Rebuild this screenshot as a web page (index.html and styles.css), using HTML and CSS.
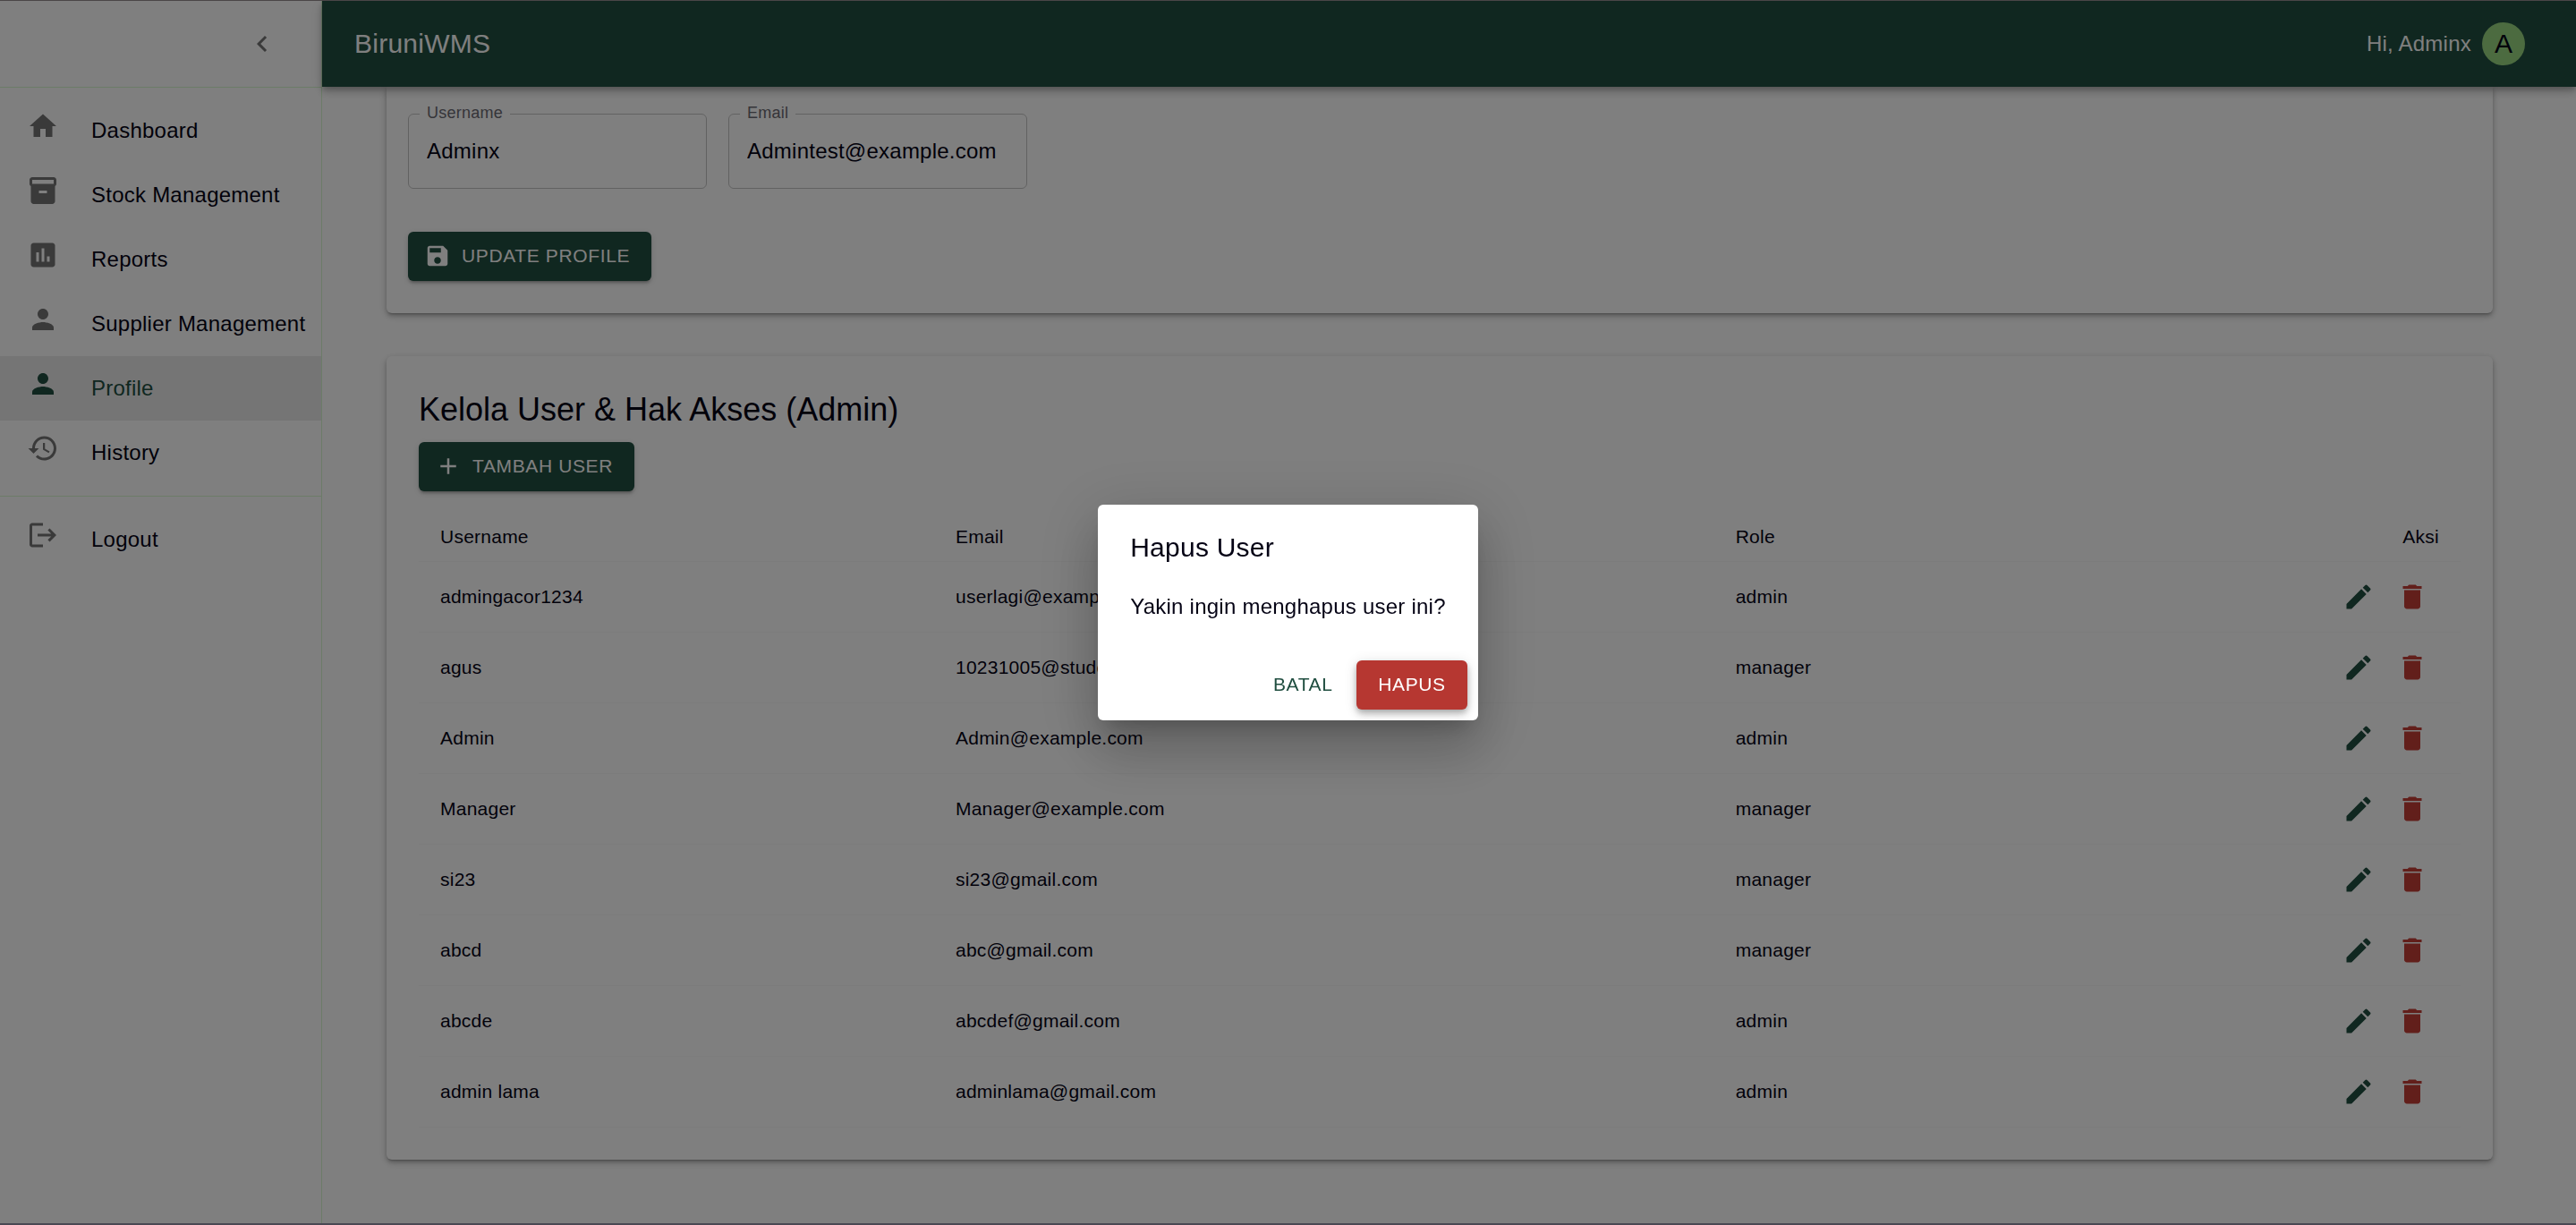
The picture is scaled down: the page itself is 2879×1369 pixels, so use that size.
FILE: index.html
```html
<!DOCTYPE html>
<html lang="id">
<head>
<meta charset="utf-8">
<meta name="viewport" content="width=device-width, initial-scale=1">
<title>BiruniWMS</title>
<link rel="stylesheet" href="styles.css">
</head>
<body>
<svg class="sprite" aria-hidden="true">
  <symbol id="i-person" viewBox="0 0 24 24"><path d="M12 12c2.21 0 4-1.79 4-4s-1.79-4-4-4-4 1.79-4 4 1.79 4 4 4m0 2c-2.67 0-8 1.34-8 4v2h16v-2c0-2.66-5.33-4-8-4"/></symbol>
  <symbol id="i-edit" viewBox="0 0 24 24"><path d="M3 17.25V21h3.75L17.81 9.94l-3.75-3.75zM20.71 7.04c.39-.39.39-1.02 0-1.41l-2.34-2.34a.996.996 0 0 0-1.41 0l-1.83 1.83 3.75 3.75z"/></symbol>
  <symbol id="i-delete" viewBox="0 0 24 24"><path d="M6 19c0 1.1.9 2 2 2h8c1.1 0 2-.9 2-2V7H6zM19 4h-3.5l-1-1h-5l-1 1H5v2h14z"/></symbol>
</svg>

<div class="app">
  <aside class="drawer">
    <div class="drawer-top">
      <button class="icon-button" type="button" aria-label="Tutup menu">
        <svg class="icon" viewBox="0 0 24 24"><path d="M15.41 7.41 14 6l-6 6 6 6 1.41-1.41L10.83 12z"/></svg>
      </button>
    </div>
    <nav class="menu">
      <a class="menu-item" href="#dashboard"><span class="menu-icon"><svg class="icon" viewBox="0 0 24 24"><path d="M10 20v-6h4v6h5v-8h3L12 3 2 12h3v8z"/></svg></span>Dashboard</a>
      <a class="menu-item" href="#stock"><span class="menu-icon"><svg class="icon" viewBox="0 0 24 24"><path d="M20 2H4c-1 0-2 .9-2 2v3.01c0 .72.43 1.34 1 1.69V20c0 1.1 1.1 2 2 2h14c.9 0 2-.9 2-2V8.7c.57-.35 1-.97 1-1.69V4c0-1.1-1-2-2-2m-5 12H9v-2h6zm5-7H4V4h16z"/></svg></span>Stock Management</a>
      <a class="menu-item" href="#reports"><span class="menu-icon"><svg class="icon" viewBox="0 0 24 24"><path d="M19 3H5c-1.1 0-2 .9-2 2v14c0 1.1.9 2 2 2h14c1.1 0 2-.9 2-2V5c0-1.1-.9-2-2-2M9 17H7v-7h2zm4 0h-2V7h2zm4 0h-2v-4h2z"/></svg></span>Reports</a>
      <a class="menu-item" href="#supplier"><span class="menu-icon"><svg class="icon"><use href="#i-person"/></svg></span>Supplier Management</a>
      <a class="menu-item selected" href="#profile" aria-current="page"><span class="menu-icon"><svg class="icon"><use href="#i-person"/></svg></span>Profile</a>
      <a class="menu-item" href="#history"><span class="menu-icon"><svg class="icon" viewBox="0 0 24 24"><path d="M13 3c-4.97 0-9 4.03-9 9H1l3.89 3.89.07.14L9 12H6c0-3.87 3.13-7 7-7s7 3.13 7 7-3.13 7-7 7c-1.93 0-3.68-.79-4.94-2.06l-1.42 1.42C8.27 19.99 10.51 21 13 21c4.97 0 9-4.03 9-9s-4.03-9-9-9m-1 5v5l4.28 2.54.72-1.21-3.5-2.08V8z"/></svg></span>History</a>
    </nav>
    <nav class="menu">
      <a class="menu-item" href="#logout"><span class="menu-icon"><svg class="icon" viewBox="0 0 24 24"><path d="m17 7-1.41 1.41L18.17 11H8v2h10.17l-2.58 2.58L17 17l5-5zM4 5h8V3H4c-1.1 0-2 .9-2 2v14c0 1.1.9 2 2 2h8v-2H4z"/></svg></span>Logout</a>
    </nav>
  </aside>

  <div class="page">
    <header class="app-bar">
      <h1 class="brand">BiruniWMS</h1>
      <span>Hi, Adminx</span>
      <span class="avatar">A</span>
    </header>

    <main class="content">
      <section class="card profile-card">
        <form class="profile-form">
          <div class="fields">
            <fieldset class="field">
              <legend><label for="username">Username</label></legend>
              <input id="username" type="text" value="Adminx">
            </fieldset>
            <fieldset class="field">
              <legend><label for="email">Email</label></legend>
              <input id="email" type="email" value="Admintest@example.com">
            </fieldset>
          </div>
          <button class="button filled" type="button">
            <svg class="icon small" viewBox="0 0 24 24"><path d="M17 3H5c-1.11 0-2 .9-2 2v14c0 1.1.89 2 2 2h14c1.1 0 2-.9 2-2V7zm-5 16c-1.66 0-3-1.34-3-3s1.34-3 3-3 3 1.34 3 3-1.34 3-3 3m3-10H5V5h10z"/></svg>
            UPDATE PROFILE
          </button>
        </form>
      </section>

      <section class="card users-card">
        <h2 class="card-title">Kelola User &amp; Hak Akses (Admin)</h2>
        <button class="button filled" type="button">
          <svg class="icon small" viewBox="0 0 24 24"><path d="M19 13h-6v6h-2v-6H5v-2h6V5h2v6h6z"/></svg>
          TAMBAH USER
        </button>
        <table class="users">
          <thead>
            <tr><th class="col-user" scope="col">Username</th><th class="col-email" scope="col">Email</th><th scope="col">Role</th><th class="actions" scope="col">Aksi</th></tr>
          </thead>
          <tbody>
            <tr><td>admingacor1234</td><td>userlagi@example.com</td><td>admin</td><td class="actions"><button class="icon-button edit" type="button" aria-label="Edit"><svg class="icon"><use href="#i-edit"/></svg></button><button class="icon-button delete" type="button" aria-label="Hapus"><svg class="icon"><use href="#i-delete"/></svg></button></td></tr>
            <tr><td>agus</td><td>10231005@student.itk.ac.id</td><td>manager</td><td class="actions"><button class="icon-button edit" type="button" aria-label="Edit"><svg class="icon"><use href="#i-edit"/></svg></button><button class="icon-button delete" type="button" aria-label="Hapus"><svg class="icon"><use href="#i-delete"/></svg></button></td></tr>
            <tr><td>Admin</td><td>Admin@example.com</td><td>admin</td><td class="actions"><button class="icon-button edit" type="button" aria-label="Edit"><svg class="icon"><use href="#i-edit"/></svg></button><button class="icon-button delete" type="button" aria-label="Hapus"><svg class="icon"><use href="#i-delete"/></svg></button></td></tr>
            <tr><td>Manager</td><td>Manager@example.com</td><td>manager</td><td class="actions"><button class="icon-button edit" type="button" aria-label="Edit"><svg class="icon"><use href="#i-edit"/></svg></button><button class="icon-button delete" type="button" aria-label="Hapus"><svg class="icon"><use href="#i-delete"/></svg></button></td></tr>
            <tr><td>si23</td><td>si23@gmail.com</td><td>manager</td><td class="actions"><button class="icon-button edit" type="button" aria-label="Edit"><svg class="icon"><use href="#i-edit"/></svg></button><button class="icon-button delete" type="button" aria-label="Hapus"><svg class="icon"><use href="#i-delete"/></svg></button></td></tr>
            <tr><td>abcd</td><td>abc@gmail.com</td><td>manager</td><td class="actions"><button class="icon-button edit" type="button" aria-label="Edit"><svg class="icon"><use href="#i-edit"/></svg></button><button class="icon-button delete" type="button" aria-label="Hapus"><svg class="icon"><use href="#i-delete"/></svg></button></td></tr>
            <tr><td>abcde</td><td>abcdef@gmail.com</td><td>admin</td><td class="actions"><button class="icon-button edit" type="button" aria-label="Edit"><svg class="icon"><use href="#i-edit"/></svg></button><button class="icon-button delete" type="button" aria-label="Hapus"><svg class="icon"><use href="#i-delete"/></svg></button></td></tr>
            <tr><td>admin lama</td><td>adminlama@gmail.com</td><td>admin</td><td class="actions"><button class="icon-button edit" type="button" aria-label="Edit"><svg class="icon"><use href="#i-edit"/></svg></button><button class="icon-button delete" type="button" aria-label="Hapus"><svg class="icon"><use href="#i-delete"/></svg></button></td></tr>
          </tbody>
        </table>
      </section>
    </main>
  </div>
</div>

<div class="backdrop">
  <div class="dialog" role="dialog" aria-modal="true" aria-labelledby="dialog-title">
    <h2 class="dialog-title" id="dialog-title">Hapus User</h2>
    <p class="dialog-text">Yakin ingin menghapus user ini?</p>
    <div class="dialog-actions">
      <button class="button plain" type="button">BATAL</button>
      <button class="button danger" type="button">HAPUS</button>
    </div>
  </div>
</div>
</body>
</html>
```

FILE: styles.css
```css
:root {
  --primary: #204e40;
  --error: #c43e36;
  --error-dark: #b63731;
  --text: #050315;
  --muted: #757575;
  --divider: #d9f9d1;
  --paper: #ffffff;
}

* {
  box-sizing: border-box;
}

body {
  margin: 0;
  min-height: 100vh;
  display: flex;
  border-top: 1px solid #4a4647;
  border-bottom: 2px solid #4a4853;
  background: var(--paper);
  color: var(--text);
  font-family: "Liberation Sans", Arial, sans-serif;
  font-size: 24px;
  line-height: 36px;
  letter-spacing: 0.01em;
}

h1, h2, p {
  margin: 0;
  font-weight: 400;
}

button, input {
  font: inherit;
  letter-spacing: inherit;
  color: inherit;
}

.sprite {
  display: none;
}

.icon {
  display: block;
  width: 36px;
  height: 36px;
  flex: none;
  fill: currentColor;
}

.icon.small {
  width: 30px;
  height: 30px;
  margin-left: -6px;
}

.icon-button {
  padding: 12px;
  border: 0;
  border-radius: 50%;
  background: none;
  color: var(--muted);
  vertical-align: middle;
}

.app {
  flex: 1;
  display: flex;
}

/* Drawer */

.drawer {
  flex: none;
  width: 360px;
  border-right: 1px solid var(--divider);
}

.drawer-top {
  display: flex;
  align-items: center;
  justify-content: flex-end;
  height: 96px;
  padding-right: 36px;
}

.menu {
  padding: 12px 0;
  border-top: 1px solid var(--divider);
}

.menu-item {
  display: flex;
  align-items: center;
  gap: 36px;
  height: 72px;
  padding: 0 30px;
  color: inherit;
  text-decoration: none;
  white-space: nowrap;
}

.menu-icon {
  padding-bottom: 10px;
  color: var(--muted);
}

.menu-item.selected {
  background: #ebebeb;
}

.menu-item.selected,
.menu-item.selected .menu-icon {
  color: var(--primary);
}

/* App bar */

.page {
  flex: 1;
  min-width: 0;
}

.app-bar {
  position: relative;
  display: flex;
  align-items: center;
  gap: 12px;
  height: 96px;
  padding: 0 57px 0 36px;
  background: var(--primary);
  color: #ffffff;
  box-shadow: 0 3px 6px -1px rgba(0, 0, 0, 0.2), 0 6px 8px 0 rgba(0, 0, 0, 0.14), 0 2px 15px 0 rgba(0, 0, 0, 0.12);
}

.brand {
  flex: 1;
  font-size: 30px;
  line-height: 48px;
}

.avatar {
  display: grid;
  place-items: center;
  width: 48px;
  height: 48px;
  border-radius: 50%;
  background: #98d680;
  color: var(--text);
  font-size: 30px;
}

/* Content */

.content {
  display: grid;
  gap: 48px;
  padding: 0 93px 48px 72px;
}

.card {
  border-radius: 6px;
  background: var(--paper);
  box-shadow: 0 3px 2px -2px rgba(0, 0, 0, 0.2), 0 3px 4px 0 rgba(0, 0, 0, 0.14), 0 2px 8px 0 rgba(0, 0, 0, 0.12), 0 4px 10px 0 rgba(0, 0, 0, 0.1);
}

.profile-card {
  padding: 19px 24px 36px;
  border-radius: 0 0 6px 6px;
}

.profile-form {
  display: grid;
  justify-items: start;
  gap: 48px;
}

.fields {
  display: flex;
  gap: 24px;
}

.field {
  width: 334px;
  margin: 0;
  padding: 0 12px;
  border: 1px solid #c4c4c4;
  border-radius: 6px;
}

.field legend {
  padding: 0 8px 2px;
  color: #6b6a73;
  font-size: 18px;
  line-height: 20px;
}

.field input {
  display: block;
  width: 100%;
  height: 72px;
  padding: 0 8px 10px;
  border: 0;
  outline: 0;
  background: none;
}

.button {
  display: inline-flex;
  align-items: center;
  justify-content: center;
  gap: 12px;
  min-width: 96px;
  padding: 9px 24px 10px;
  border: 0;
  border-radius: 6px;
  font-size: 21px;
  line-height: 36px;
  letter-spacing: 0.03em;
}

.filled {
  background: var(--primary);
  color: #ffffff;
  box-shadow: 0 4px 2px -3px rgba(0, 0, 0, 0.2), 0 3px 3px 0 rgba(0, 0, 0, 0.14), 0 2px 8px 0 rgba(0, 0, 0, 0.12);
}

.users-card {
  padding: 36px;
}

.card-title {
  margin-bottom: 12px;
  font-size: 36px;
  line-height: 48px;
  letter-spacing: normal;
}

.users {
  width: 100%;
  margin-top: 24px;
  border-collapse: separate;
  border-spacing: 0;
  font-size: 21px;
}

.users th,
.users td {
  padding: 9px 24px;
  border-bottom: 1px solid #f9f9f9;
  font-weight: 400;
  text-align: left;
}

.users .col-user {
  width: 25.24%;
}

.users .col-email {
  width: 38.2%;
}

.users .actions {
  text-align: right;
}

.users td.actions {
  font-size: 0;
  line-height: 0;
}

.edit {
  color: var(--primary);
}

.delete {
  color: var(--error);
}

/* Dialog */

.backdrop {
  position: fixed;
  inset: 1px 0 2px;
  display: grid;
  place-items: center;
  background: rgba(0, 0, 0, 0.5);
}

.dialog {
  border-radius: 6px;
  background: var(--paper);
  box-shadow: 0 16px 22px -10px rgba(0, 0, 0, 0.2), 0 36px 57px 4px rgba(0, 0, 0, 0.14), 0 14px 69px 12px rgba(0, 0, 0, 0.12);
}

.dialog-title {
  padding: 24px 36px;
  font-size: 30px;
  line-height: 48px;
}

.dialog-text {
  padding: 0 36px 30px;
}

.dialog-actions {
  display: flex;
  justify-content: flex-end;
  gap: 12px;
  padding: 12px;
}

.plain {
  padding: 9px 12px 10px;
  background: none;
  color: var(--primary);
}

.danger {
  background: var(--error-dark);
  color: #ffffff;
  box-shadow: 0 3px 6px -1px rgba(0, 0, 0, 0.2), 0 6px 8px 0 rgba(0, 0, 0, 0.14), 0 2px 15px 0 rgba(0, 0, 0, 0.12);
}
```
